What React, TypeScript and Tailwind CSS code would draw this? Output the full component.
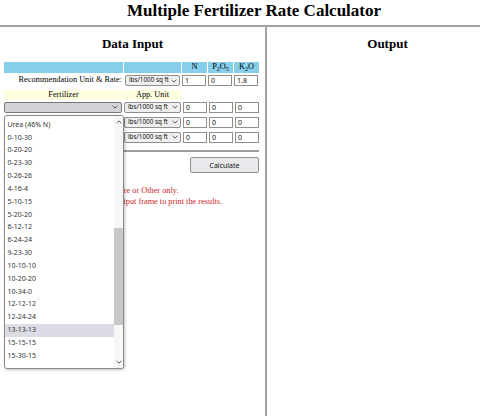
const fertilizerOptions = [
  'Urea (46% N)',
  '0-10-30',
  '0-20-20',
  '0-23-30',
  '0-26-26',
  '4-16-4',
  '5-10-15',
  '5-20-20',
  '6-12-12',
  '6-24-24',
  '9-23-30',
  '10-10-10',
  '10-20-20',
  '10-34-0',
  '12-12-12',
  '12-24-24',
  '13-13-13',
  '15-15-15',
  '15-30-15',
]

const sans = "font-['Noto_Sans',sans-serif]"

function Caret({ up = false }: { up?: boolean }) {
  return (
    <svg width="6" height="4" viewBox="0 0 6 4" className={`shrink-0 ${up ? 'rotate-180' : ''}`}>
      <path d="M0.7 0.9 L3 3.1 L5.3 0.9" fill="none" stroke="#444" strokeWidth="0.9" />
    </svg>
  )
}

function UnitSelect({ narrow = false }: { narrow?: boolean }) {
  return (
    <div
      className={`${sans} flex h-[11px] ${narrow ? 'w-[55px]' : 'w-[57px]'} items-center justify-between rounded-[2px] border border-[#8f8f8f] bg-[#efefef] pl-[3px] pr-[2px] text-[6.3px] leading-none text-[#111]`}
    >
      {/* the narrower recommendation select cuts its label, as in the page */}
      <span className={narrow ? 'w-[40px] overflow-hidden whitespace-nowrap' : 'whitespace-nowrap'}>
        lbs/1000 sq ft
      </span>
      <Caret />
    </div>
  )
}

function NumInput({ value }: { value: string }) {
  return (
    <div className="w-[26px]">
      <div
        className={`${sans} ml-[1px] flex h-[11px] w-[24px] items-center border border-[#8f8f8f] bg-white pl-[2px] text-[7px] leading-none text-[#111]`}
      >
        {value}
      </div>
    </div>
  )
}

function FertilizerRow({ className = '' }: { className?: string }) {
  return (
    <div className={`flex h-[11px] gap-[1px] ${className}`}>
      <div className="w-[119px]">
        <div className="flex h-[11px] w-[118px] items-center justify-end rounded-[2px] border border-[#767676] bg-[#d4d4d8] pr-[3px]">
          <Caret />
        </div>
      </div>
      <UnitSelect />
      <div className="flex">
        <NumInput value="0" />
        <NumInput value="0" />
        <NumInput value="0" />
      </div>
    </div>
  )
}

export default function App() {
  return (
    <div className="relative flex h-[416px] w-[480px] flex-col overflow-hidden bg-white font-['Liberation_Serif',serif] text-black">
      <header className="flex h-[25px] items-start justify-center pl-[28px] pt-[1px] text-[17px] font-bold leading-[20px]">
        Multiple Fertilizer Rate Calculator
      </header>

      <div className="flex flex-1 border-t-2 border-[#a3a3a3]">
        {/* input frame */}
        <section className="w-[265px]">
          <h2 className="flex h-[33px] items-center justify-center text-[13px] font-bold">Data Input</h2>

          <div className="mt-[2px] pl-[4px] text-[8.3px] leading-none">
            <div className="flex h-[11px] gap-[1px]">
              <div className="w-[119px] bg-[#87ceeb]" />
              <div className="w-[57px] bg-[#87ceeb]" />
              <div className="flex w-[25px] items-center justify-center bg-[#87ceeb]">N</div>
              <div className="flex w-[25px] items-center justify-center bg-[#87ceeb]">
                P<sub className="text-[6px]">2</sub>O<sub className="text-[6px]">5</sub>
              </div>
              <div className="flex w-[25px] items-center justify-center bg-[#87ceeb]">
                K<sub className="text-[6px]">2</sub>O
              </div>
            </div>

            <div className="mt-[2px] flex h-[11px] gap-[1px]">
              <div className="flex w-[119px] items-center justify-end pr-[1px]">
                Recommendation Unit &amp; Rate:
              </div>
              <div className="pl-[1px]">
                <UnitSelect narrow />
              </div>
              <div className="flex">
                <NumInput value="1" />
                <NumInput value="0" />
                <NumInput value="1.8" />
              </div>
            </div>

            <div className="mt-[4px] flex h-[10px] gap-[1px]">
              <div className="flex w-[119px] items-center justify-center bg-[#ffffe0]">Fertilizer</div>
              <div className="flex w-[57px] items-center justify-center bg-[#ffffe0]">App. Unit</div>
            </div>

            <FertilizerRow className="mt-[1.5px]" />
            <FertilizerRow className="mt-[4px]" />
            <FertilizerRow className="mt-[4px]" />

            <div className="mt-[7.5px] w-[255px] border-t-2 border-[#9c9c9c]" />

            <div className="mt-[5px] flex w-[255px] justify-end">
              <button
                className={`${sans} h-[16px] w-[69px] rounded-[2px] border border-[#8f8f8f] bg-[#e9e9ed] text-[7px] text-[#111]`}
              >
                Calculate
              </button>
            </div>

            <div className="mt-[12px] w-[255px] text-center text-[8.3px] leading-[11px] text-[#cc1f1f]">
              <p>* For Manure or Other only.</p>
              <p>Right click within the output frame to print the results.</p>
            </div>
          </div>
        </section>

        <div className="w-[2px] bg-[#a3a3a3]" />

        {/* output frame */}
        <section className="flex-1">
          <h2 className="flex h-[33px] items-center justify-center pl-[28px] text-[13px] font-bold">Output</h2>
        </section>
      </div>

      {/* open fertilizer dropdown */}
      <div
        className={`${sans} absolute left-[4px] top-[115px] flex h-[254px] w-[120px] overflow-hidden rounded-[3px] border border-[#8a8a8a] bg-white text-[7px] text-[#333] shadow-[1px_1px_3px_rgba(0,0,0,0.25)]`}
      >
        <ul className="w-[109px] pt-[2.6px]">
          {fertilizerOptions.map((name) => (
            <li
              key={name}
              className={`flex h-[12.83px] items-center pl-[2.5px] ${name === '13-13-13' ? 'bg-[#dcdce4]' : ''}`}
            >
              {name}
            </li>
          ))}
        </ul>
        <div className="flex w-[9px] flex-col items-center bg-[#f7f7f7]">
          <div className="flex h-[12px] items-center">
            <Caret up />
          </div>
          <div className="mt-[100px] h-[97px] w-[9px] bg-[#c8c8c8]" />
          <div className="flex-1" />
          <div className="flex h-[12px] items-center">
            <Caret />
          </div>
        </div>
      </div>
    </div>
  )
}
